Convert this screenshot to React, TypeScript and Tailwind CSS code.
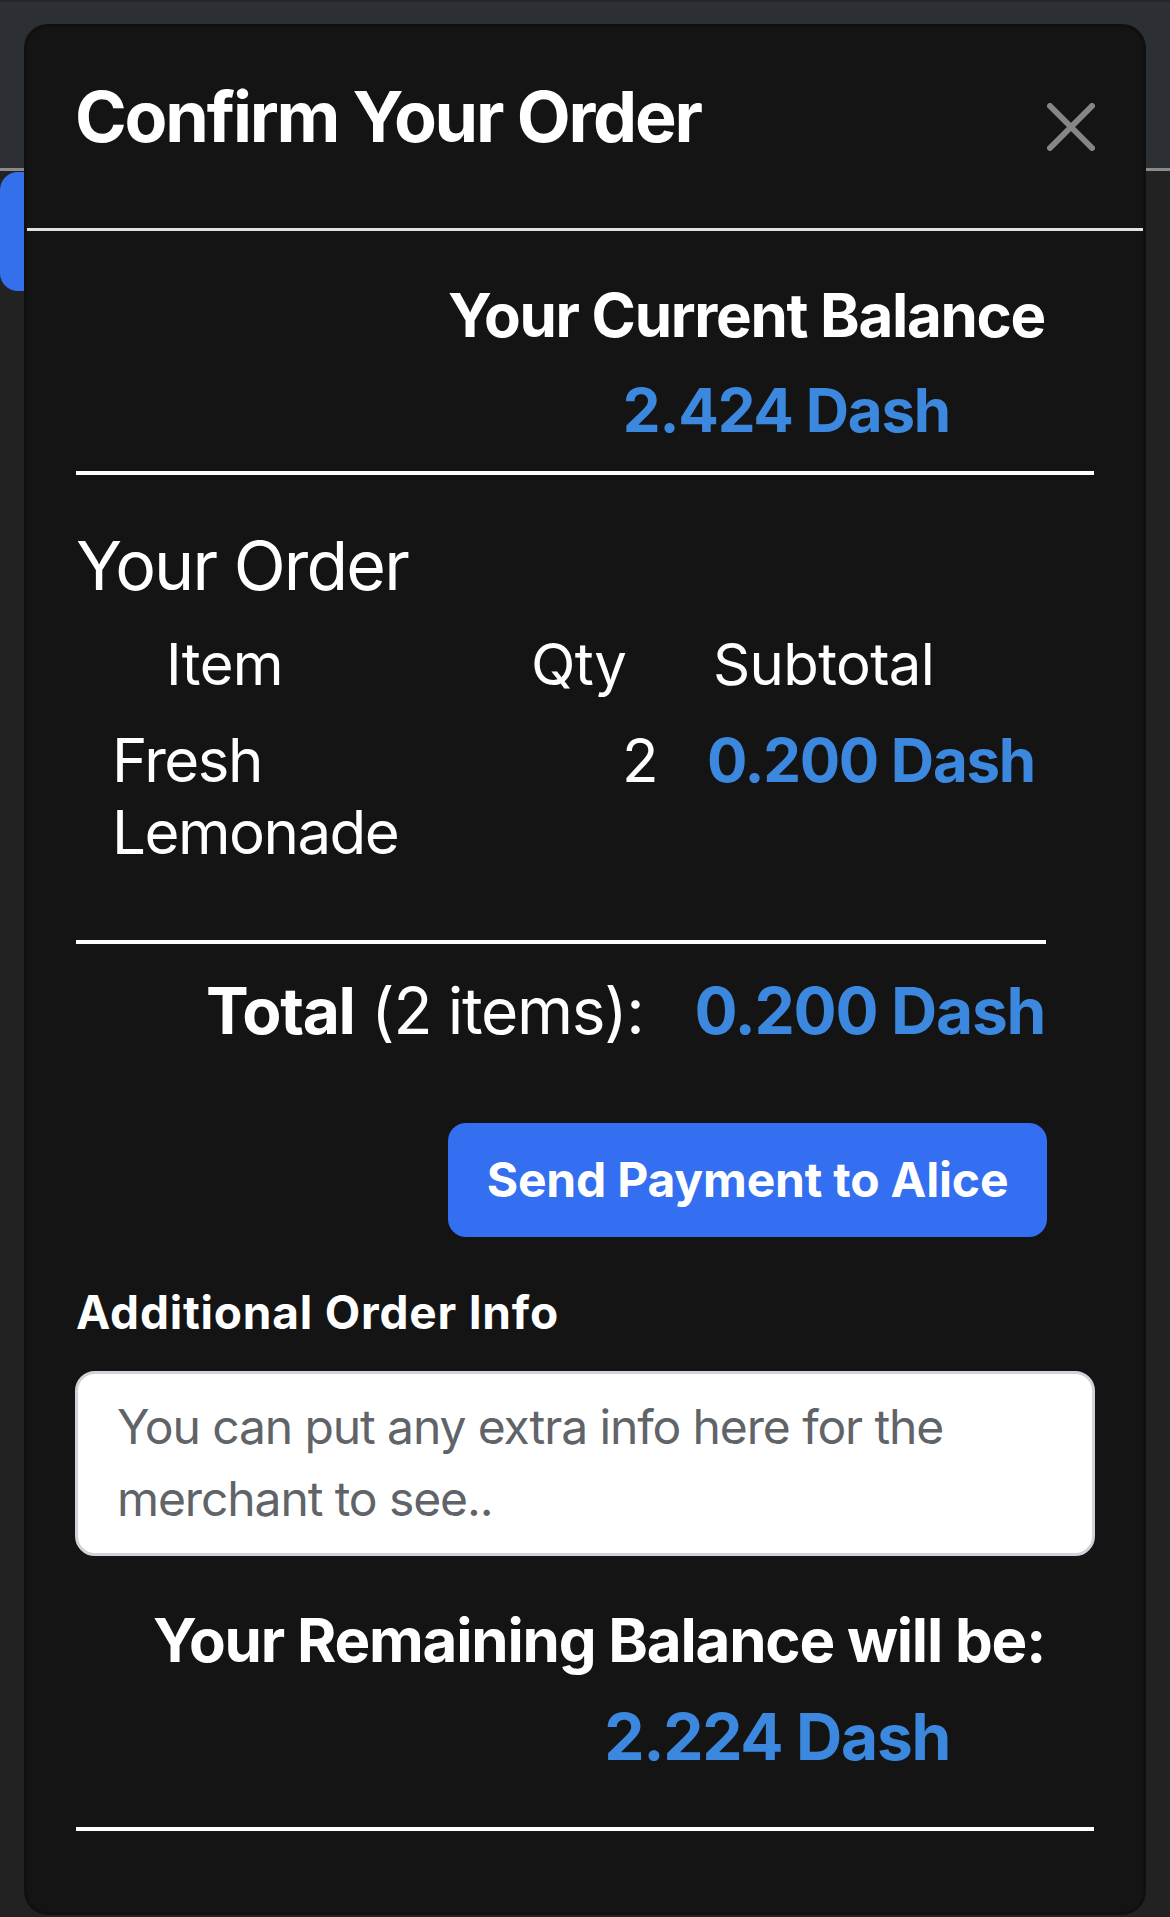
export default function App() {
  return (
    <div className="relative min-h-[1917px] w-[1170px] overflow-hidden bg-[#222222] font-['Inter',sans-serif]">
      <div className="flex h-[171px] justify-end border-t-[2px] border-b-[3px] border-t-[#24282c] border-b-[#8a8a8a] bg-[#2c3035]">
        <div className="mr-[28px] mt-[22px] h-[100px] w-[169px] rounded-[24px] bg-[#474a4f]" />
      </div>
      <div className="mt-[1px] h-[119px] w-[120px] rounded-[18px] bg-[#3570ec]" />

      <div className="absolute left-[24px] top-[24px] w-[1122px] rounded-[24px] border-[3px] border-black/20 bg-[#141414] text-white">
        <div className="flex h-[204px] items-start justify-between border-b-[3px] border-[#dee2e6] px-[48px]">
          <h4 className="mt-[48px] text-[70px] leading-[84px] font-bold tracking-[-2.2px]">Confirm Your Order</h4>
          <svg className="mt-[76px]" width="48" height="48" viewBox="0 0 48 48" fill="none">
            <path d="M3 3 L45 45 M45 3 L3 45" stroke="#868686" strokeWidth="6" strokeLinecap="round" />
          </svg>
        </div>

        <div className="flex flex-col px-[49px] pt-[48px] pb-[81px]">
          <div className="pr-[49px] text-right text-[60px] leading-[72px] font-bold tracking-[-1.3px]">Your Current Balance</div>
          <div className="mt-[23px] pr-[144px] text-right text-[60px] leading-[72px] font-bold tracking-[-1.2px] text-[#3b88de]">2.424 Dash</div>
          <div className="mt-[25px] h-[4px] bg-white" />

          <div className="mt-[49px] text-[68px] leading-[82px] font-normal tracking-[-1.8px]">Your Order</div>
          <div className="mt-[23px] flex text-[58px] leading-[70px] tracking-[-0.6px]">
            <div className="w-[455px] pl-[90px]">Item</div>
            <div className="w-[182px]">Qty</div>
            <div>Subtotal</div>
          </div>
          <div className="mt-[25px] flex items-start text-[60px] leading-[72px] tracking-[-1.5px]">
            <div className="w-[455px] pl-[36px] pr-[100px]">Fresh Lemonade</div>
            <div className="w-[126px] text-right">2</div>
            <div className="ml-[50px] font-bold tracking-[-1.3px] text-[#3b88de]">0.200 Dash</div>
          </div>
          <div className="mt-[72px] mr-[48px] h-[4px] bg-white" />

          <div className="mt-[28px] flex justify-end gap-[51px] pr-[49px] text-[64px] leading-[77px] tracking-[-1.3px]">
            <span>
              <span className="font-bold">Total</span> (2 items):
            </span>
            <span className="font-bold text-[#3b88de]">0.200 Dash</span>
          </div>

          <button className="mt-[74px] mr-[47px] flex h-[114px] w-[599px] items-center justify-center self-end rounded-[18px] bg-[#336ff0] text-[48px] font-bold tracking-[-0.2px] text-white">
            Send Payment to Alice
          </button>

          <div className="mt-[47px] text-[46px] leading-[56px] font-bold tracking-[0.8px]">Additional Order Info</div>
          <textarea
            className="-mx-[1px] mt-[31px] h-[185px] resize-none rounded-[20px] border-[3px] border-[#ced4da] bg-white pl-[39px] pr-[120px] py-[17px] text-[48px] leading-[72px] tracking-[-1.1px] text-[#212529] placeholder:text-[#606368] outline-none"
            placeholder="You can put any extra info here for the merchant to see.."
          />

          <div className="mt-[48px] pr-[49px] text-right text-[60px] leading-[72px] font-bold tracking-[-1.2px]">Your Remaining Balance will be:</div>
          <div className="mt-[23px] pr-[144px] text-right text-[64px] leading-[76px] font-bold tracking-[-1.3px] text-[#3b88de]">2.224 Dash</div>
          <div className="mt-[52px] h-[4px] bg-white" />
        </div>
      </div>
    </div>
  );
}
